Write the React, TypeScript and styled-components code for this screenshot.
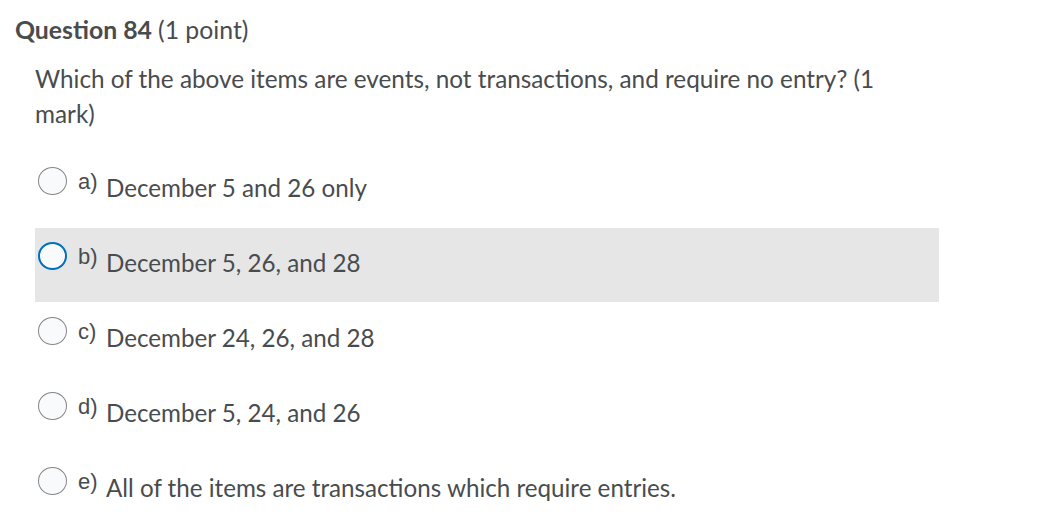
import React from "react";
import styled, { createGlobalStyle } from "styled-components";

const Global = createGlobalStyle`
  html, body { margin: 0; padding: 0; background: #ffffff; }
  body { font-family: Lato, "Noto Sans", sans-serif; color: #494c4e; }
`;

const Page = styled.div`
  padding: 15px 0 0 15px;
  width: 1041px;
  box-sizing: border-box;
`;

const Title = styled.h2`
  margin: 0;
  font-size: 24.8px;
  line-height: 30px;
  font-weight: 700;
  color: #494c4e;
`;

const Points = styled.span`
  font-weight: 400;
`;

const Body = styled.div`
  padding-left: 20px;
  margin-top: 16px;
`;

const Prompt = styled.p`
  margin: 0;
  font-size: 24.3px;
  line-height: 35px;
  width: 880px;
`;

const Options = styled.div`
  margin-top: 22px;
  width: 904px;
  display: flex;
  flex-direction: column;
  gap: 1px;
`;

const Row = styled.label<{ $active?: boolean }>`
  display: flex;
  align-items: flex-start;
  height: 74px;
  box-sizing: border-box;
  padding: 14px 0 0 3px;
  background: ${(p) => (p.$active ? "#e6e6e6" : "transparent")};
  cursor: pointer;
`;

const Radio = styled.span<{ $active?: boolean }>`
  flex: none;
  width: 29px;
  height: 28px;
  box-sizing: border-box;
  border-radius: 50%;
  background: #f9fafc;
  border: ${(p) => (p.$active ? "2px solid #006fbf" : "1px solid #868686")};
`;

const Letter = styled.span`
  margin-left: 11px;
  margin-top: 4px;
  font-family: "Liberation Sans", Arial, sans-serif;
  font-size: 22px;
  line-height: 22px;
  color: #494c4e;
  width: 28px;
  flex: none;
`;

const Answer = styled.span`
  margin-top: 7px;
  font-size: 24.2px;
  line-height: 28px;
  color: #494c4e;
  white-space: nowrap;
`;

const options = [
  { k: "a)", t: "December 5 and 26 only" },
  { k: "b)", t: "December 5, 26, and 28", active: true },
  { k: "c)", t: "December 24, 26, and 28" },
  { k: "d)", t: "December 5, 24, and 26" },
  { k: "e)", t: "All of the items are transactions which require entries." },
];

export default function App() {
  return (
    <Page>
      <Global />
      <Title>
        Question 84 <Points>(1 point)</Points>
      </Title>
      <Body>
        <Prompt>
          Which of the above items are events, not transactions, and require no entry? (1 mark)
        </Prompt>
        <Options>
          {options.map((o) => (
            <Row key={o.k} $active={o.active}>
              <Radio $active={o.active} />
              <Letter>{o.k}</Letter>
              <Answer>{o.t}</Answer>
            </Row>
          ))}
        </Options>
      </Body>
    </Page>
  );
}
